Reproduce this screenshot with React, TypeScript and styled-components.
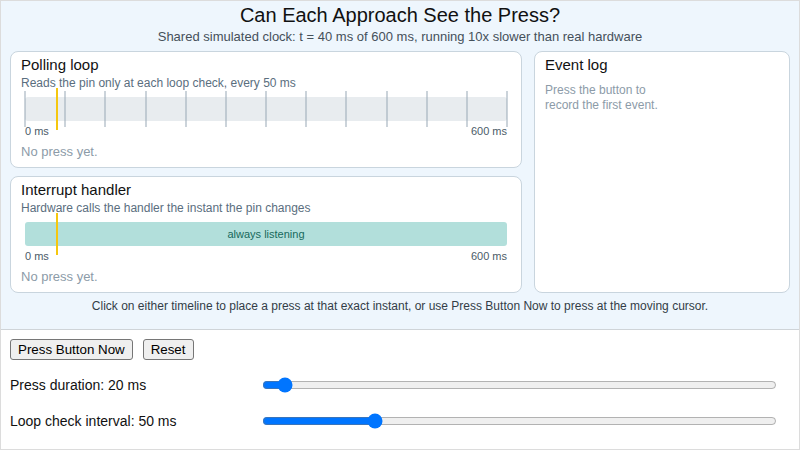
import React from "react"
import styled, { createGlobalStyle } from "styled-components"

const GlobalStyle = createGlobalStyle`
  html, body {
    margin: 0;
    padding: 0;
    background: #ffffff;
  }
  body {
    font-family: "Liberation Sans", Arial, Helvetica, sans-serif;
    color: #111;
  }
`

const TOTAL_MS = 600
const NOW_MS = 40
const LOOP_MS = 50

const Page = styled.div`
  box-sizing: border-box;
  width: 800px;
  height: 450px;
  border: 1px solid #dcdcdc;
  display: flex;
  flex-direction: column;
`

const Stage = styled.section`
  background: #eef6fd;
  border-bottom: 1px solid #cfd4d8;
  padding: 3px 9px 0;
  height: 329px;
  box-sizing: border-box;
`

const Title = styled.h1`
  margin: 0;
  font-size: 20px;
  font-weight: normal;
  line-height: 22px;
  text-align: center;
  color: #111;
`

const Clock = styled.div`
  margin-top: 3px;
  font-size: 13px;
  line-height: 16px;
  text-align: center;
  color: #45505a;
`

const Columns = styled.div`
  display: grid;
  grid-template-columns: 2fr 1fr;
  gap: 12px;
  margin-top: 6px;
`

const Stack = styled.div`
  display: flex;
  flex-direction: column;
  gap: 8px;
`

const Card = styled.div`
  background: #fff;
  border: 1px solid #c9d5de;
  border-radius: 8px;
  padding: 4px 10px 7px;
  box-sizing: border-box;
`

const CardTitle = styled.div`
  font-size: 15px;
  line-height: 18px;
  color: #111;
`

const CardSub = styled.div`
  margin-top: 1px;
  font-size: 12px;
  line-height: 16px;
  color: #5a6e7e;
`

const Timeline = styled.div`
  position: relative;
  margin: -3px 4px 0;
  padding: 9px 0 6px;
  cursor: crosshair;
`

const Track = styled.div<{ $live?: boolean }>`
  height: 24px;
  border-radius: 3px;
  background: ${(p) => (p.$live ? "#b2dfdb" : "#e8ecef")};
  color: #17695c;
  font-size: 11px;
  line-height: 24px;
  text-align: center;
`

const Tick = styled.div`
  position: absolute;
  top: 3px;
  height: 36px;
  width: 1px;
  background: #97a8b5;
  transform: translateX(-0.5px);
`

const Cursor = styled.div`
  position: absolute;
  top: 0;
  height: 42px;
  width: 2px;
  background: #f5c70f;
  transform: translateX(-1px);
`

const Scale = styled.div`
  display: flex;
  justify-content: space-between;
  margin: -2px 4px 0;
  font-size: 11px;
  line-height: 13px;
  color: #4c5b68;
`

const Status = styled.div`
  margin-top: 6px;
  font-size: 13px;
  line-height: 16px;
  color: #8c9ba8;
`

const LogEmpty = styled.div`
  margin-top: 9px;
  max-width: 122px;
  font-size: 12px;
  line-height: 15px;
  color: #8c9ba8;
`

const Caption = styled.div`
  margin-top: 5px;
  font-size: 12px;
  line-height: 16px;
  text-align: center;
  color: #333d47;
`

const Controls = styled.section`
  padding: 9px 9px 0;
  background: #fff;
`

const ButtonRow = styled.div`
  display: flex;
  gap: 10px;
`

const Button = styled.button`
  font-family: "Liberation Sans", Arial, sans-serif;
  font-size: 13.333px;
  padding: 1px 7px;
  height: 21px;
  background: #efefef;
  border: 1px solid #767676;
  border-radius: 3px;
  color: #000;
`

const Sliders = styled.div`
  display: grid;
  grid-template-columns: 250px 518px;
  row-gap: 16px;
  margin-top: 15px;
  align-items: center;
`

const Label = styled.label`
  font-size: 14px;
  line-height: 20px;
  color: #111;
`

const Range = styled.input`
  width: 515px;
  margin: 2px;
  accent-color: #0075ff;
`

const pct = (ms: number) => `${(ms / TOTAL_MS) * 100}%`

const PollingCard: React.FC = () => {
  const checks: number[] = []
  for (let t = 0; t <= TOTAL_MS; t += LOOP_MS) checks.push(t)
  return (
    <Card>
      <CardTitle>Polling loop</CardTitle>
      <CardSub>Reads the pin only at each loop check, every {LOOP_MS} ms</CardSub>
      <Timeline>
        <Track />
        {checks.map((t) => (
          <Tick key={t} style={{ left: pct(t) }} />
        ))}
        <Cursor style={{ left: pct(NOW_MS) }} />
      </Timeline>
      <Scale>
        <span>0 ms</span>
        <span>{TOTAL_MS} ms</span>
      </Scale>
      <Status>No press yet.</Status>
    </Card>
  )
}

const InterruptCard: React.FC = () => (
  <Card>
    <CardTitle>Interrupt handler</CardTitle>
    <CardSub>Hardware calls the handler the instant the pin changes</CardSub>
    <Timeline>
      <Track $live>always listening</Track>
      <Cursor style={{ left: pct(NOW_MS) }} />
    </Timeline>
    <Scale>
      <span>0 ms</span>
      <span>{TOTAL_MS} ms</span>
    </Scale>
    <Status>No press yet.</Status>
  </Card>
)

export default function App() {
  const [duration, setDuration] = React.useState(20)
  const [interval, setInterval] = React.useState(LOOP_MS)

  return (
    <>
      <GlobalStyle />
      <Page>
        <Stage>
          <Title>Can Each Approach See the Press?</Title>
          <Clock>
            Shared simulated clock: t = {NOW_MS} ms of {TOTAL_MS} ms, running 10x slower than real
            hardware
          </Clock>
          <Columns>
            <Stack>
              <PollingCard />
              <InterruptCard />
            </Stack>
            <Card>
              <CardTitle>Event log</CardTitle>
              <LogEmpty>Press the button to record the first event.</LogEmpty>
            </Card>
          </Columns>
          <Caption>
            Click on either timeline to place a press at that exact instant, or use Press Button Now
            to press at the moving cursor.
          </Caption>
        </Stage>
        <Controls>
          <ButtonRow>
            <Button>Press Button Now</Button>
            <Button>Reset</Button>
          </ButtonRow>
          <Sliders>
            <Label htmlFor="dur">Press duration: {duration} ms</Label>
            <Range
              id="dur"
              type="range"
              min={5}
              max={500}
              value={duration}
              onChange={(e) => setDuration(Number(e.target.value))}
            />
            <Label htmlFor="int">Loop check interval: {interval} ms</Label>
            <Range
              id="int"
              type="range"
              min={10}
              max={200}
              value={interval}
              onChange={(e) => setInterval(Number(e.target.value))}
            />
          </Sliders>
        </Controls>
      </Page>
    </>
  )
}
